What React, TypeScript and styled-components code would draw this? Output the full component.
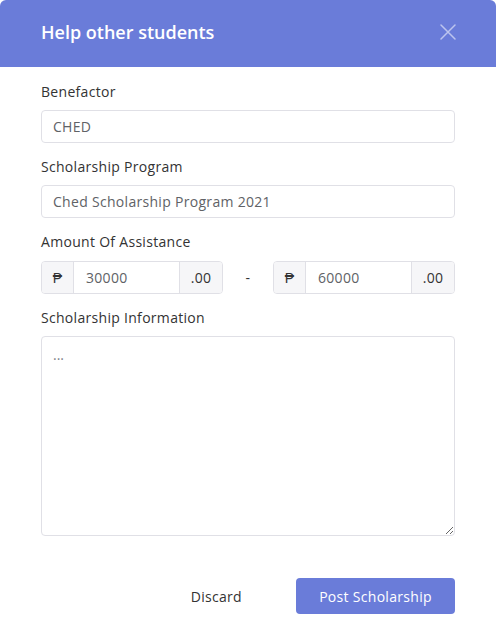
import { createGlobalStyle } from "styled-components"
import styled from "styled-components"

const GlobalStyle = createGlobalStyle`
  html, body {
    margin: 0;
    padding: 0;
    background: #ffffff;
  }
  body {
    font-family: "Open Sans", "Liberation Sans", sans-serif;
    letter-spacing: 0.3px;
  }
  * {
    box-sizing: border-box;
  }
`

const Modal = styled.div`
  width: 496px;
  height: 634px;
  background: #ffffff;
  border-radius: 6px 6px 0 0;
  overflow: hidden;
  display: flex;
  flex-direction: column;
`

const Header = styled.div`
  height: 67px;
  background: #6a7cd9;
  display: flex;
  align-items: center;
  justify-content: space-between;
  padding: 0 40px 3px 41px;
`

const Title = styled.h2`
  margin: 0;
  font-size: 18px;
  font-weight: 600;
  color: #ffffff;
  letter-spacing: 0;
`

const CloseButton = styled.button`
  border: 0;
  background: none;
  padding: 0;
  width: 16px;
  height: 16px;
  display: flex;
  align-items: center;
  justify-content: center;
  cursor: pointer;
`

const Body = styled.div`
  padding: 15px 41px 0 41px;
  display: flex;
  flex-direction: column;
`

const Field = styled.div`
  display: flex;
  flex-direction: column;
  margin-bottom: 14px;
`

const Label = styled.label`
  font-size: 14px;
  color: #333333;
  line-height: 20px;
  margin-bottom: 8px;
`

const TextInput = styled.input`
  height: 33px;
  width: 100%;
  border: 1px solid #e0e0e6;
  border-radius: 4px;
  padding: 0 11px;
  font-family: inherit;
  letter-spacing: inherit;
  font-size: 14px;
  color: #606266;
  outline: none;
`

const AmountRow = styled.div`
  display: flex;
  align-items: center;
  margin-top: 1px;
`

const Group = styled.div<{ $width: number }>`
  width: ${(p) => p.$width}px;
  height: 33px;
  display: flex;
  border: 1px solid #e0e0e6;
  border-radius: 4px;
  overflow: hidden;
`

const Addon = styled.span<{ $width: number }>`
  width: ${(p) => p.$width}px;
  flex: none;
  background: #f6f6f8;
  display: flex;
  align-items: center;
  justify-content: center;
  font-size: 14px;
  color: #333333;
`

const GroupInput = styled.input`
  flex: 1;
  min-width: 0;
  border: 0;
  border-left: 1px solid #e0e0e6;
  border-right: 1px solid #e0e0e6;
  padding: 0 12px;
  font-family: inherit;
  letter-spacing: inherit;
  font-size: 14px;
  color: #606266;
  outline: none;
`

const Dash = styled.span`
  flex: 1;
  text-align: center;
  font-size: 14px;
  color: #333333;
`

const TextArea = styled.textarea`
  height: 200px;
  width: 100%;
  border: 1px solid #e0e0e6;
  border-radius: 4px;
  padding: 8px 11px;
  font-family: inherit;
  font-size: 14px;
  color: #606266;
  resize: vertical;
  outline: none;
  &::placeholder {
    color: #808288;
  }
`

const Footer = styled.div`
  display: flex;
  justify-content: flex-end;
  align-items: center;
  padding: 28px 41px 0 41px;
  gap: 54px;
`

const TextButton = styled.button`
  border: 0;
  background: none;
  font-family: inherit;
  letter-spacing: inherit;
  font-size: 14px;
  color: #333333;
  padding: 0;
  cursor: pointer;
`

const PrimaryButton = styled.button`
  width: 159px;
  height: 36px;
  border: 0;
  border-radius: 4px;
  background: #6a7cd9;
  color: #ffffff;
  font-family: inherit;
  letter-spacing: inherit;
  font-size: 14px;
  cursor: pointer;
`

const AmountGroup = ({ value }: { value: string }) => (
  <Group $width={182}>
    <Addon $width={31}>₱</Addon>
    <GroupInput defaultValue={value} />
    <Addon $width={42}>.00</Addon>
  </Group>
)

export default function App() {
  return (
    <>
      <GlobalStyle />
      <Modal>
        <Header>
          <Title>Help other students</Title>
          <CloseButton aria-label="Close">
            <svg width="16" height="16" viewBox="0 0 16 16">
              <path
                d="M1 1 L15 15 M15 1 L1 15"
                stroke="rgba(255,255,255,0.55)"
                strokeWidth="1.5"
                strokeLinecap="round"
              />
            </svg>
          </CloseButton>
        </Header>
        <Body>
          <Field>
            <Label>Benefactor</Label>
            <TextInput defaultValue="CHED" />
          </Field>
          <Field>
            <Label>Scholarship Program</Label>
            <TextInput defaultValue="Ched Scholarship Program 2021" />
          </Field>
          <Field>
            <Label>Amount Of Assistance</Label>
            <AmountRow>
              <AmountGroup value="30000" />
              <Dash>-</Dash>
              <AmountGroup value="60000" />
            </AmountRow>
          </Field>
          <Field>
            <Label>Scholarship Information</Label>
            <TextArea placeholder="..." />
          </Field>
        </Body>
        <Footer>
          <TextButton>Discard</TextButton>
          <PrimaryButton>Post Scholarship</PrimaryButton>
        </Footer>
      </Modal>
    </>
  )
}
